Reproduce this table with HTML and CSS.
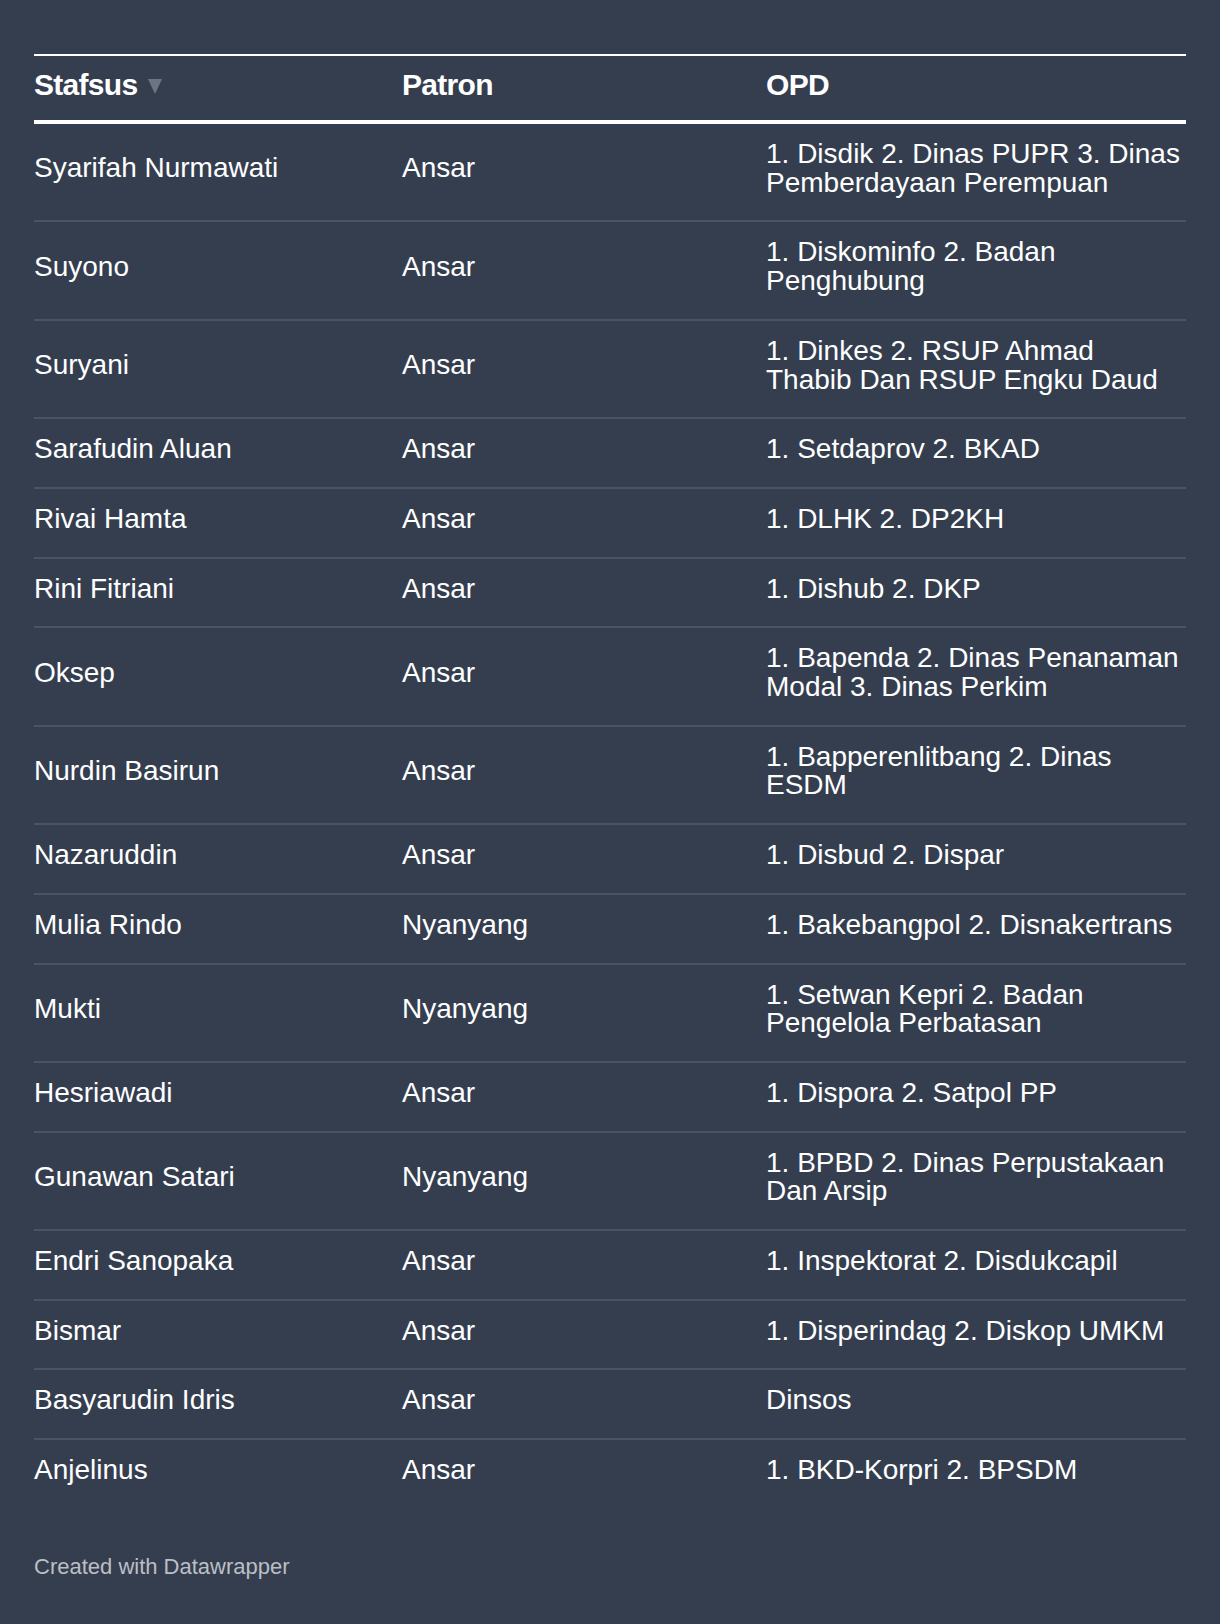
FILE: index.html
```html
<!DOCTYPE html>
<html lang="id">
<head>
<meta charset="utf-8">
<title>Stafsus</title>
<link rel="stylesheet" href="styles.css">
</head>
<body>
<div class="chart">
  <table class="dw-table">
    <colgroup>
      <col class="col-name">
      <col class="col-patron">
      <col class="col-opd">
    </colgroup>
    <thead>
      <tr>
        <th>Stafsus<span class="sort-arrow" aria-label="sorted descending"></span></th>
        <th>Patron</th>
        <th>OPD</th>
      </tr>
    </thead>
    <tbody>
      <tr><td>Syarifah Nurmawati</td><td>Ansar</td><td>1. Disdik 2. Dinas PUPR 3. Dinas Pemberdayaan Perempuan</td></tr>
      <tr><td>Suyono</td><td>Ansar</td><td>1. Diskominfo 2. Badan Penghubung</td></tr>
      <tr><td>Suryani</td><td>Ansar</td><td>1. Dinkes 2. RSUP Ahmad Thabib Dan RSUP Engku Daud</td></tr>
      <tr><td>Sarafudin Aluan</td><td>Ansar</td><td>1. Setdaprov 2. BKAD</td></tr>
      <tr><td>Rivai Hamta</td><td>Ansar</td><td>1. DLHK 2. DP2KH</td></tr>
      <tr><td>Rini Fitriani</td><td>Ansar</td><td>1. Dishub 2. DKP</td></tr>
      <tr><td>Oksep</td><td>Ansar</td><td>1. Bapenda 2. Dinas Penanaman Modal 3. Dinas Perkim</td></tr>
      <tr><td>Nurdin Basirun</td><td>Ansar</td><td>1. Bapperenlitbang 2. Dinas ESDM</td></tr>
      <tr><td>Nazaruddin</td><td>Ansar</td><td>1. Disbud 2. Dispar</td></tr>
      <tr><td>Mulia Rindo</td><td>Nyanyang</td><td>1. Bakebangpol 2. Disnakertrans</td></tr>
      <tr><td>Mukti</td><td>Nyanyang</td><td>1. Setwan Kepri 2. Badan Pengelola Perbatasan</td></tr>
      <tr><td>Hesriawadi</td><td>Ansar</td><td>1. Dispora 2. Satpol PP</td></tr>
      <tr><td>Gunawan Satari</td><td>Nyanyang</td><td>1. BPBD 2. Dinas Perpustakaan Dan Arsip</td></tr>
      <tr><td>Endri Sanopaka</td><td>Ansar</td><td>1. Inspektorat 2. Disdukcapil</td></tr>
      <tr><td>Bismar</td><td>Ansar</td><td>1. Disperindag 2. Diskop UMKM</td></tr>
      <tr><td>Basyarudin Idris</td><td>Ansar</td><td>Dinsos</td></tr>
      <tr><td>Anjelinus</td><td>Ansar</td><td>1. BKD-Korpri 2. BPSDM</td></tr>
    </tbody>
  </table>
  <footer class="credit">Created with Datawrapper</footer>
</div>
</body>
</html>
```

FILE: styles.css
```css
html, body {
  margin: 0;
  padding: 0;
  background: #343e4f;
}

body {
  font-family: "Liberation Sans", Arial, Helvetica, sans-serif;
  color: #ffffff;
}

.chart {
  padding: 54px 34px 0 34px;
  min-height: 1570px;
}

.dw-table {
  width: 100%;
  border-collapse: collapse;
  table-layout: fixed;
  border-top: 2px solid #ffffff;
}

.col-name { width: 352px; }
.col-patron { width: 364px; }
.col-opd { width: 436px; }

.dw-table th {
  font-weight: bold;
  font-size: 30px;
  letter-spacing: -0.7px;
  line-height: 34px;
  text-align: left;
  padding: 12px 16px 18px 16px;
  border-bottom: 4px solid #ffffff;
  vertical-align: middle;
}

.dw-table td {
  font-size: 28px;
  line-height: 28.7px;
  padding: 16px 16px 23px 16px;
  vertical-align: middle;
  border-bottom: 2px solid #4a5465;
}

.dw-table tbody tr:last-child td {
  border-bottom: none;
}

.dw-table th:first-child,
.dw-table td:first-child {
  padding-left: 0;
}

.dw-table th:last-child,
.dw-table td:last-child {
  padding-right: 5px;
}

.sort-arrow {
  display: inline-block;
  width: 0;
  height: 0;
  margin-left: 11px;
  border-left: 7.5px solid transparent;
  border-right: 7.5px solid transparent;
  border-top: 15px solid #6d7582;
  vertical-align: 1px;
}

.credit {
  margin-top: 46px;
  font-size: 22px;
  line-height: 26px;
  color: #bcbfc4;
}
```
